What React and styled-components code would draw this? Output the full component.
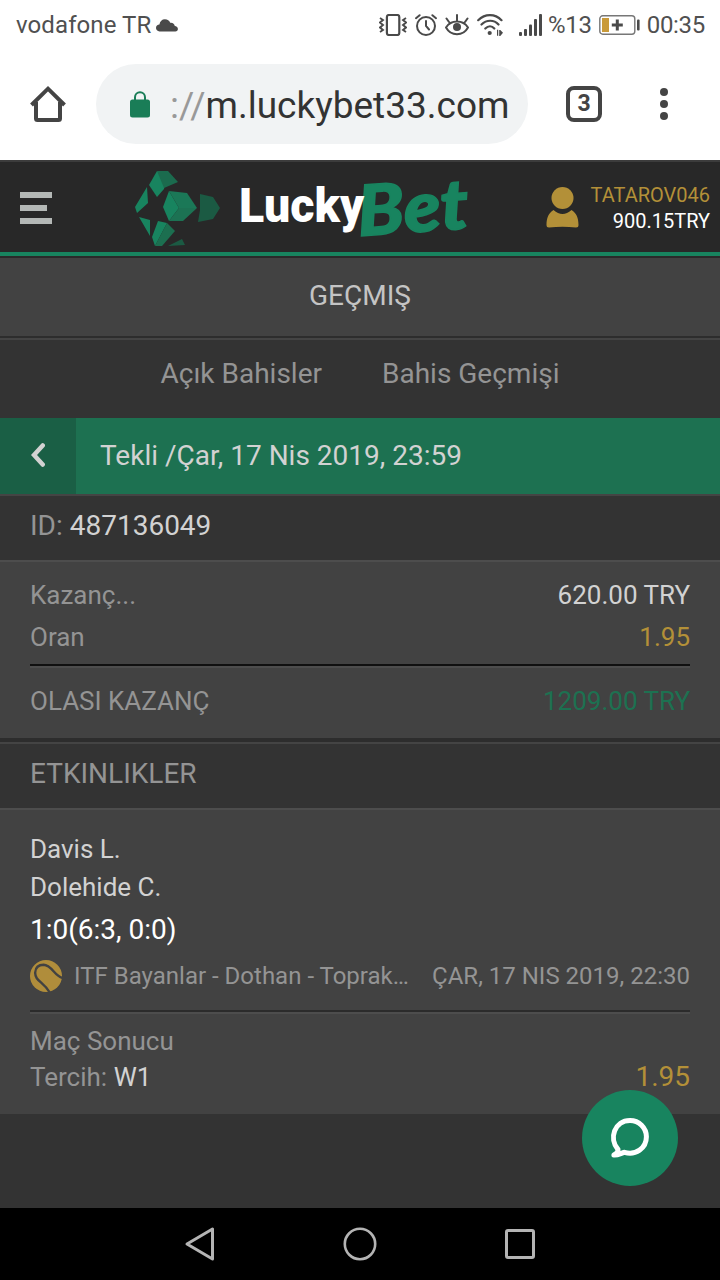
import React from 'react';
import styled, { createGlobalStyle } from 'styled-components';

const c = {
  page: '#333333',
  panel: '#424242',
  header: '#282828',
  edge: '#4d4d4d',
  green: '#18845f',
  bar: '#1d7151',
  barDark: '#1a5f45',
  gold: '#b39038',
  muted: '#949494',
  text: '#d2d2d2',
  ink: '#4a4a4a',
};

const Global = createGlobalStyle`
  * { box-sizing: border-box; }
  body { margin: 0; background: ${c.page}; font-family: Roboto, "Liberation Sans", sans-serif; }
  svg { display: block; flex: none; }
`;

const Phone = styled.div`
  position: relative;
  width: 720px;
  height: 1280px;
  display: flex;
  flex-direction: column;
  overflow: hidden;
  background: ${c.page};
`;

const StatusBar = styled.div`
  height: 50px;
  flex: none;
  display: flex;
  align-items: center;
  padding: 0 15px 0 16px;
  font-size: 24px;
  line-height: 50px;
  color: #505050;
  background: #fff;
  white-space: nowrap;
`;
const Carrier = styled.span`
  width: 140px;
  letter-spacing: 0.1px;
`;
const StatusIcons = styled.div`
  display: flex;
  align-items: center;
  gap: 8px;
  margin-left: auto;
`;
const Percent = styled.span`
  margin: 0 -1px 0 -3px;
  letter-spacing: -0.3px;
`;
const Clock = styled.span`
  margin-left: -1px;
  letter-spacing: -0.3px;
`;

const BrowserBar = styled.div`
  height: 110px;
  flex: none;
  display: flex;
  align-items: flex-start;
  padding: 14px 0 0 30px;
  background: #fff;
`;
const BrowserIcon = styled.div`
  height: 80px;
  display: flex;
  align-items: center;
  margin-left: ${(p) => p.$gap || 0}px;
`;
const SignalSlot = styled.div`
  margin-left: 8px;
`;
const Address = styled.div`
  width: 432px;
  height: 80px;
  margin-left: 30px;
  border-radius: 40px;
  display: flex;
  align-items: center;
  gap: 20px;
  padding-left: 34px;
  background: #f1f3f4;
`;
const Url = styled.div`
  font-size: 37px;
  line-height: 80px;
  color: #333;
  white-space: nowrap;
  padding-top: 3px;
`;
const Scheme = styled.span`
  color: #999;
`;
const TabCount = styled.div`
  width: 36px;
  height: 36px;
  border: 4px solid #444;
  border-radius: 8px;
  text-align: center;
  font-size: 23px;
  line-height: 28px;
  font-weight: 700;
  color: #444;
`;

const Header = styled.header`
  height: 98px;
  flex: none;
  display: flex;
  align-items: center;
  padding: 0 10px 0 20px;
  background: ${c.header};
  border-top: 2px solid #3c3c3c;
  box-shadow: inset 0 -2px 0 #2a2a2a, inset 0 -6px 0 ${c.green};
`;
const Burger = styled.div`
  width: 32px;
  display: flex;
  flex-direction: column;
  gap: 7px;
  padding-bottom: 4px;
`;
const BurgerLine = styled.i`
  width: ${(p) => p.$w}px;
  height: 6px;
  background: #b4b8b6;
`;
const Logo = styled.svg`
  margin-left: 82px;
  align-self: flex-start;
  overflow: visible;
`;
const Account = styled.div`
  display: flex;
  align-items: center;
  gap: 12px;
  margin-left: auto;
  padding-bottom: 5px;
`;
const AccountText = styled.div`
  text-align: right;
  font-size: 20px;
  line-height: 26px;
  color: #fff;
`;
const UserName = styled.div`
  color: ${c.gold};
`;

const Title = styled.h1`
  height: 78px;
  flex: none;
  margin: 0;
  text-align: center;
  font-size: 28px;
  font-weight: 400;
  line-height: 75px;
  color: #c4c4c4;
  background: ${c.panel};
`;
const Tabs = styled.nav`
  height: 82px;
  flex: none;
  display: flex;
  justify-content: center;
  gap: 60px;
  border-top: 2px solid #2d2d2d;
  box-shadow: inset 0 2px 0 #444;
  font-size: 28px;
  line-height: 71px;
  color: ${c.muted};
`;
const CouponBar = styled.div`
  height: 78px;
  flex: none;
  display: flex;
  border-bottom: 2px solid #444;
  background: ${c.bar};
  color: ${c.text};
  font-size: 28px;
  line-height: 75px;
`;
const Back = styled.div`
  width: 76px;
  display: flex;
  align-items: center;
  justify-content: center;
  padding-bottom: 2px;
  background: ${c.barDark};
`;
const CouponName = styled.div`
  padding-left: 24px;
`;
const Strip = styled.div`
  height: 66px;
  flex: none;
  padding-left: 30px;
  border-bottom: 2px solid ${c.edge};
  font-size: 28px;
  line-height: 59px;
  color: ${c.muted};
`;
const Panel = styled.section`
  flex: none;
  height: ${(p) => p.$h}px;
  padding: ${(p) => p.$top}px 30px 0;
  background: ${c.panel};
`;
const Gutter = styled.div`
  height: 6px;
  flex: none;
  border-top: 4px solid #2d2d2d;
  background: #444;
`;
const Row = styled.div`
  display: flex;
  justify-content: space-between;
  align-items: ${(p) => p.$align || 'center'};
  font-size: ${(p) => p.$size || 26}px;
  line-height: ${(p) => p.$h}px;
  height: ${(p) => p.$h}px;
  color: ${(p) => p.$color || c.muted};
  white-space: nowrap;
`;
const Score = styled(Row)`
  padding-top: 2px;
`;
const Value = styled.span`
  color: ${(p) => p.$color || c.text};
  font-size: ${(p) => p.$size || 'inherit'};
`;
const Rule = styled.div`
  height: 4px;
  margin: ${(p) => p.$m};
  border-top: 2px solid ${(p) => p.$dark};
  background: ${c.edge};
`;
const League = styled.span`
  display: flex;
  align-items: center;
  gap: 12px;
`;
const Chat = styled.button`
  position: absolute;
  left: 582px;
  top: 1090px;
  width: 96px;
  height: 96px;
  padding: 0;
  border: 0;
  border-radius: 50%;
  display: flex;
  align-items: center;
  justify-content: center;
  background: ${c.green};
`;
const NavBar = styled.footer`
  height: 72px;
  flex: none;
  margin-top: auto;
  display: flex;
  align-items: center;
  justify-content: space-between;
  padding: 0 182px 0 184px;
  background: #000;
`;

const CloudIcon = () => (
  <svg width="22" height="13" viewBox="0 0 22 13" fill={c.ink}>
    <path d="M3.5 12.4C1.400 12.400 0 11 0 9.100 0 7.100 1.500 5.700 3.400 5.600 4 2.200 6 .2 8.900.2c2.600 0 4.500 1.300 5.300 3.600 2.500-.4 4.300 1.100 4.600 3.100 1.800.2 3.100 1.300 3.100 3 0 1.500-1 2.500-2.500 2.500z" />
  </svg>
);
const VibrateIcon = () => (
  <svg width="28" height="22" viewBox="0 0 28 22" fill="none" stroke={c.ink}>
    <rect x="7.900" y="1" width="12.400" height="20" rx="2" strokeWidth="2.200" />
    <path d="M1 4l3 2-3 2.500 3 2.500-3 2.500L4 16l-3 2M27 4l-3 2 3 2.500-3 2.500 3 2.500-3 2.500 3 2" strokeWidth="1.900" />
  </svg>
);
const AlarmIcon = () => (
  <svg width="22" height="22" viewBox="0 0 22 22" fill="none" stroke={c.ink} strokeWidth="2" strokeLinecap="round">
    <circle cx="11" cy="12" r="9" />
    <path d="M11 7v5l3 3.500M1 4.200l3.600-3M21 4.200l-3.600-3" />
  </svg>
);
const EyeIcon = () => (
  <svg width="24" height="22" viewBox="0 0 24 22" fill="none" stroke={c.ink} strokeWidth="2" strokeLinecap="round">
    <path d="M1 13.500C6 5.500 18 5.500 23 13.500 18 22.500 6 22.500 1 13.500zM12 6.500V1M4 8L1.500 4.500M20 8l2.500-3.500" />
    <circle cx="12" cy="13" r="4" fill={c.ink} stroke="none" />
  </svg>
);
const WifiIcon = () => (
  <svg width="26" height="22" viewBox="0 0 26 22" fill="none" stroke={c.ink} strokeWidth="2.200" strokeLinecap="round">
    <path d="M1.200 6.200C8-.6 18-.6 24.500 6.200M4.500 10.500c5-5 12.500-5 17 0M8.300 14.500c3-3 6.500-3 9 0" />
    <circle cx="12.700" cy="19" r="2.100" fill={c.ink} stroke="none" />
    <path d="M17 18.500l3-2.700v6h1.200v-6h-1.200zM26 18.700l-2.700-2.700h-1.100v6h1.100z" fill={c.ink} stroke="none" />
  </svg>
);
const SignalIcon = () => (
  <svg width="24" height="22" viewBox="0 0 24 22" fill={c.ink}>
    <rect x="0" y="18" width="3" height="4" rx="1" />
    <rect x="5" y="15" width="3" height="7" rx="1" />
    <rect x="10" y="10.500" width="3" height="11.500" rx="1" />
    <rect x="15" y="5" width="3" height="17" rx="1" />
    <rect x="20" y="0" width="3" height="22" rx="1" />
  </svg>
);
const BatteryIcon = () => (
  <svg width="41" height="20" viewBox="0 0 41 20" fill="none">
    <rect x=".8" y=".8" width="35" height="18.400" rx="3" stroke="#777" strokeWidth="1.400" />
    <rect x="3" y="3" width="7" height="14" fill="#c99a3a" />
    <path d="M12.800 10h11M18.300 4.500v11" stroke={c.ink} strokeWidth="3" />
    <rect x="38" y="4.500" width="2.600" height="11" rx="1" fill={c.ink} />
  </svg>
);
const HomeIcon = () => (
  <svg width="36" height="38" viewBox="0 0 36 38" fill="none" stroke="#444" strokeWidth="4">
    <path d="M6 17v16.500q0 1.500 1.500 1.500h21q1.500 0 1.500-1.500V17" />
    <path d="M1.500 20L18 3.700 34.500 20" />
  </svg>
);
const LockIcon = () => (
  <svg width="20" height="27" viewBox="0 0 20 27">
    <rect y="8.500" width="20" height="18" rx="2.500" fill="#1a7d57" />
    <path d="M5 10V6.300a5 5 0 0 1 10 0V10" fill="none" stroke="#1a7d57" strokeWidth="2" />
  </svg>
);
const DotsIcon = () => (
  <svg width="8" height="32" viewBox="0 0 8 32" fill="#444">
    <circle cx="4" cy="4" r="4" />
    <circle cx="4" cy="16" r="4" />
    <circle cx="4" cy="28" r="4" />
  </svg>
);
const UserIcon = () => (
  <svg width="33" height="41" viewBox="0 0 33 41" fill={c.gold}>
    <circle cx="16.500" cy="11" r="11" />
    <path d="M7.500 23Q16.500 31 25.500 23C30.500 26 32.500 31 32.500 38Q32.500 40.500 30 40.500Q16.500 39 3 40.500.5 40.500.5 38C.5 31 2.500 26 7.500 23z" />
  </svg>
);
const TennisIcon = () => (
  <svg width="32" height="32" viewBox="0 0 32 32">
    <circle cx="16" cy="16" r="16" fill="#b08d3b" />
    <path d="M33 18C25 17 22 5 13.500 4.800 8 4.800 5.500 8 5.200 12.500 4.700 21 14 22 20 33" fill="none" stroke={c.panel} strokeWidth="2.400" />
  </svg>
);
const ChatIcon = () => (
  <svg width="40" height="42" viewBox="0 0 40 42" fill="none" stroke="#fff" strokeWidth="5" strokeLinecap="round" strokeLinejoin="round">
    <path d="M3.900 38Q8.500 35.500 8 32.500C-1.500 21.500 4.500 3.500 20 3.500c9 0 16.400 7.300 16.400 16.300C36.400 31.500 25.500 38.500 14.500 35.300 11 36 8 38.500 3.900 38z" />
  </svg>
);

const LuckyBetLogo = () => (
  <Logo width="340" height="88" viewBox="134 162 340 88">
    <g fill="#18845f">
      <path d="M157 171l-8 14 8 12 7-8 2-10z" />
      <path d="M157 171h11l10 11-14 6z" fill="#1b6b4e" />
      <path d="M147 187l1 16-11 10-2-6zM139 217l11 3v16zM158 221l-6 16 3 9 12-23z" />
      <path d="M167 223l8 8-13 15h-7z" fill="#1c6f50" />
      <path d="M169 191l-6 16 6 14 10-13z" />
      <path d="M169 191l18 2 10 15h-18z" fill="#1b7857" />
      <path d="M179 208h18l-14 13h-14z" fill="#1c7253" />
      <path d="M200 194l13 3 7 11-7 11-15 3 2-12zM168 246l14-7 3 6z" fill="#1b5a43" />
    </g>
    <text x="359" y="236" transform="rotate(-4 359 236)" textLength="111" lengthAdjust="spacingAndGlyphs" fill="#18845f" stroke="#18845f" strokeWidth="1.500" fontFamily="Lato, sans-serif" fontWeight="900" fontStyle="italic" fontSize="70">Bet</text>
    <text x="239" y="222" textLength="125" lengthAdjust="spacingAndGlyphs" fill="#fff" fontFamily="Roboto, sans-serif" fontWeight="900" fontSize="48">Lucky</text>
  </Logo>
);

export default function App() {
  return (
    <Phone>
      <Global />
      <StatusBar>
        <Carrier>vodafone TR</Carrier>
        <CloudIcon />
        <StatusIcons>
          <VibrateIcon />
          <AlarmIcon />
          <EyeIcon />
          <WifiIcon />
          <SignalSlot><SignalIcon /></SignalSlot>
          <Percent>%13</Percent>
          <BatteryIcon />
          <Clock>00:35</Clock>
        </StatusIcons>
      </StatusBar>
      <BrowserBar>
        <BrowserIcon><HomeIcon /></BrowserIcon>
        <Address>
          <LockIcon />
          <Url><Scheme>://</Scheme>m.luckybet33.com</Url>
        </Address>
        <BrowserIcon $gap={38}><TabCount>3</TabCount></BrowserIcon>
        <BrowserIcon $gap={58}><DotsIcon /></BrowserIcon>
      </BrowserBar>

      <Header>
        <Burger>
          <BurgerLine $w={32} />
          <BurgerLine $w={27} />
          <BurgerLine $w={32} />
        </Burger>
        <LuckyBetLogo />
        <Account>
          <UserIcon />
          <AccountText>
            <UserName>TATAROV046</UserName>
            <div>900.15TRY</div>
          </AccountText>
        </Account>
      </Header>

      <Title>GEÇMIŞ</Title>
      <Tabs>
        <span>Açık Bahisler</span>
        <span>Bahis Geçmişi</span>
      </Tabs>
      <CouponBar>
        <Back>
          <svg width="14" height="24" viewBox="0 0 14 24" fill="none" stroke={c.text} strokeWidth="4.500" strokeLinecap="round">
            <path d="M11.700 2.500L3 12l8.700 9.500" />
          </svg>
        </Back>
        <CouponName>Tekli /Çar, 17 Nis 2019, 23:59</CouponName>
      </CouponBar>
      <Strip>ID: <Value>487136049</Value></Strip>

      <Panel $h={176} $top={12}>
        <Row $h={42}><span>Kazanç...</span><Value>620.00 TRY</Value></Row>
        <Row $h={42}><span>Oran</span><Value $color={c.gold}>1.95</Value></Row>
        <Rule $m="6px 0 0" $dark="#101010" />
        <Row $h={66}><span>OLASI KAZANÇ</span><Value $color={c.bar}>1209.00 TRY</Value></Row>
      </Panel>
      <Gutter />
      <Strip>ETKINLIKLER</Strip>

      <Panel $h={304} $top={20}>
        <Row $h={38} $color={c.text}>Davis L.</Row>
        <Row $h={38} $color={c.text}>Dolehide C.</Row>
        <Score $h={46} $size={28} $color="#fff">1:0(6:3, 0:0)</Score>
        <Row $h={48} $size={24}>
          <League>
            <TennisIcon />
            <span>ITF Bayanlar - Dothan - Toprak…</span>
          </League>
          <span>ÇAR, 17 NIS 2019, 22:30</span>
        </Row>
        <Rule $m="10px 0 9px" $dark="#2b2b2b" />
        <Row $h={36}>Maç Sonucu</Row>
        <Row $h={36} $align="baseline">
          <span>Tercih: <Value>W1</Value></span>
          <Value $color={c.gold} $size="28px">1.95</Value>
        </Row>
      </Panel>

      <Chat aria-label="chat"><ChatIcon /></Chat>

      <NavBar>
        <svg width="32" height="36" viewBox="0 0 32 36" fill="none" stroke="#b4b4b4" strokeWidth="3" strokeLinejoin="round">
          <path d="M28.500 3v30L3 18z" />
        </svg>
        <svg width="36" height="36" viewBox="0 0 36 36" fill="none" stroke="#b4b4b4" strokeWidth="2.600">
          <circle cx="19" cy="18" r="15.200" />
        </svg>
        <svg width="36" height="36" viewBox="0 0 36 36" fill="none" stroke="#b4b4b4" strokeWidth="3">
          <rect x="4.500" y="4.500" width="27" height="27" rx="1.500" />
        </svg>
      </NavBar>
    </Phone>
  );
}
